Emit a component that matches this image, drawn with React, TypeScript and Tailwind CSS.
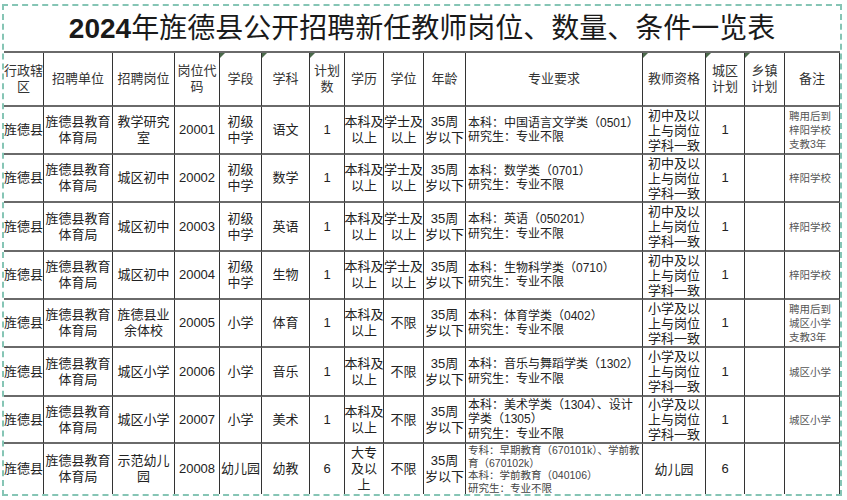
const font = "font-['Liberation_Sans','Noto_Sans_CJK_SC',sans-serif]";

const header: string[][] = [
  ["行政辖", "区"],
  ["招聘单位"],
  ["招聘岗位"],
  ["岗位代", "码"],
  ["学段"],
  ["学科"],
  ["计划", "数"],
  ["学历"],
  ["学位"],
  ["年龄"],
  ["专业要求"],
  ["教师资格"],
  ["城区", "计划"],
  ["乡镇", "计划"],
  ["备注"],
];

// columns that carry the little excel comment marker
const marked = [4, 5, 6, 11, 12, 13];

const unit = ["旌德县教育", "体育局"];
const age = ["35周", "岁以下"];
const grad = "研究生：专业不限";
const junior = ["初中及以", "上与岗位", "学科一致"];
const primary = ["小学及以", "上与岗位", "学科一致"];

const rows: string[][][] = [
  [["旌德县"], unit, ["教学研究", "室"], ["20001"], ["初级", "中学"], ["语文"], ["1"], ["本科及", "以上"], ["学士及", "以上"], age, ["本科：中国语言文学类（0501）", grad], junior, ["1"], [], ["聘用后到", "梓阳学校", "支教3年"]],
  [["旌德县"], unit, ["城区初中"], ["20002"], ["初级", "中学"], ["数学"], ["1"], ["本科及", "以上"], ["学士及", "以上"], age, ["本科：数学类（0701）", grad], junior, ["1"], [], ["梓阳学校"]],
  [["旌德县"], unit, ["城区初中"], ["20003"], ["初级", "中学"], ["英语"], ["1"], ["本科及", "以上"], ["学士及", "以上"], age, ["本科：英语（050201）", grad], junior, ["1"], [], ["梓阳学校"]],
  [["旌德县"], unit, ["城区初中"], ["20004"], ["初级", "中学"], ["生物"], ["1"], ["本科及", "以上"], ["学士及", "以上"], age, ["本科：生物科学类（0710）", grad], junior, ["1"], [], ["梓阳学校"]],
  [["旌德县"], unit, ["旌德县业", "余体校"], ["20005"], ["小学"], ["体育"], ["1"], ["本科及", "以上"], ["不限"], age, ["本科：体育学类（0402）", grad], primary, ["1"], [], ["聘用后到", "城区小学", "支教3年"]],
  [["旌德县"], unit, ["城区小学"], ["20006"], ["小学"], ["音乐"], ["1"], ["本科及", "以上"], ["不限"], age, ["本科：音乐与舞蹈学类（1302）", grad], primary, ["1"], [], ["城区小学"]],
  [["旌德县"], unit, ["城区小学"], ["20007"], ["小学"], ["美术"], ["1"], ["本科及", "以上"], ["不限"], age, ["本科：美术学类（1304）、设计", "学类（1305）", grad], primary, ["1"], [], ["城区小学"]],
  [["旌德县"], unit, ["示范幼儿", "园"], ["20008"], ["幼儿园"], ["幼教"], ["6"], ["大专", "及以", "上"], ["不限"], age, ["专科：早期教育（670101k）、学前教", "育（670102k）", "本科：学前教育（040106）", grad], ["幼儿园"], ["6"], [], []],
];

function colClass(col: number, last: boolean) {
  if (col === 10) {
    return last
      ? "items-start pl-[2px] text-[10.5px] leading-[12.5px] text-[#444]"
      : "items-start pl-[2px] text-[12px] leading-[14.5px] text-[#222]";
  }
  if (col === 11) return "items-center text-[13px] leading-[15px] text-[#222]";
  if (col === 14) return "items-start pl-[4px] text-[10.5px] leading-[14px] text-[#555]";
  return "items-center text-[13px] leading-[16px] text-[#222]";
}

function Cell({ lines, cls, mark, bottom }: { lines: string[]; cls: string; mark?: boolean; bottom: boolean }) {
  return (
    <div
      className={`relative flex flex-col justify-center overflow-hidden border-r border-r-[#333] ${
        bottom ? "border-b-2 border-b-[#6a6a6a]" : ""
      } ${cls}`}
    >
      {mark && (
        <span className="absolute left-0 top-0 h-0 w-0 border-t-[5px] border-r-[5px] border-t-[#4b6a4b] border-r-transparent" />
      )}
      {lines.map((l, i) => (
        <span key={i} className="whitespace-nowrap">
          {l}
        </span>
      ))}
    </div>
  );
}

export default function App() {
  return (
    <div className={`h-[500px] w-[847px] overflow-hidden bg-white ${font}`}>
      <div className="ml-[2px] mt-[4px] w-fit border-2 border-dashed border-[#86c5b5]">
        <div className="grid grid-cols-[40px_69px_62px_45px_42px_48px_35px_39px_40px_42px_177px_63px_39px_40px_55px] grid-rows-[47px_54px_48px_48px_49px_48px_48px_49px_47px_50px]">
          <div className="col-span-full flex items-center justify-center border-b-2 border-b-[#6a6a6a] text-[28px] leading-none text-[#1a1a1a]">
            <span className="font-bold">2024</span>
            <span className="font-normal">年旌德县公开招聘新任教师岗位、数量、条件一览表</span>
          </div>

          {header.map((h, c) => (
            <Cell key={`h${c}`} lines={h} cls="items-center text-[13px] leading-[16px] text-[#333]" mark={marked.includes(c)} bottom />
          ))}

          {rows.map((r, ri) =>
            r.map((lines, c) => (
              <Cell
                key={`${ri}-${c}`}
                lines={lines}
                cls={colClass(c, ri === rows.length - 1)}
                bottom={ri !== rows.length - 1}
              />
            ))
          )}
        </div>
      </div>
    </div>
  );
}
